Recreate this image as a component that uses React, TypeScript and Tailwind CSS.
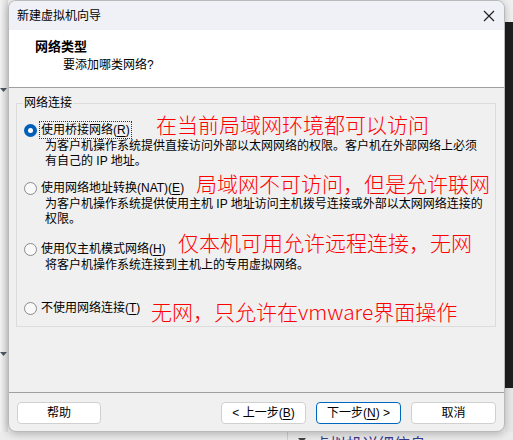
import React from "react";

const UI = "font-['Liberation_Sans','Noto_Sans_CJK_SC',sans-serif]";
const CJK = "font-['Noto_Sans_CJK_SC',sans-serif]";

function Radio({ on }: { on?: boolean }) {
  if (on)
    return (
      <span className="w-[13px] h-[13px] rounded-full bg-[#005fb8] flex items-center justify-center shrink-0">
        <span className="w-[5px] h-[5px] rounded-full bg-white" />
      </span>
    );
  return <span className="w-[13px] h-[13px] rounded-full border border-[#8b8b8b] bg-[#f9f9f9] shrink-0" />;
}

function Row({ on, text, k, focus }: { on?: boolean; text: string; k: string; focus?: boolean }) {
  return (
    <div className="h-[18px] flex items-center">
      <Radio on={on} />
      <span
        className={
          "ml-[2px] px-[1px] leading-[16px] " +
          (focus ? "border border-dotted border-[#333]" : "border border-transparent")
        }
      >
        {text}(<span className="underline underline-offset-2">{k}</span>)
      </span>
    </div>
  );
}

function Btn({ children, primary, w }: { children: React.ReactNode; primary?: boolean; w: string }) {
  return (
    <div
      className={
        "h-[22px] rounded-[4px] bg-white flex items-center justify-center text-[12px] " +
        w +
        (primary ? " border border-[#0067c0]" : " border border-[#d0d0d0]")
      }
    >
      {children}
    </div>
  );
}

const RED = "absolute text-[21px] leading-[21px] font-light text-[#ff0000] whitespace-nowrap " + CJK;

export default function App() {
  return (
    <div className={"w-[513px] h-[440px] overflow-hidden bg-[#f0f0f0] flex flex-col text-black " + UI}>
      <div className="flex h-[432px]">
        {/* left strip */}
        <div className="w-[8px] bg-gradient-to-r from-[#f3f3f3] to-[#dcdcdc] flex flex-col">
          <div className="h-[88px]" />
          <svg width="7" height="4" viewBox="0 0 7 4">
            <polygon points="0,0 7,0 3.5,4" fill="#4b5864" />
          </svg>
          <div className="h-[260px]" />
          <svg width="7" height="4" viewBox="0 0 7 4">
            <polygon points="0,0 7,0 3.5,4" fill="#4b5864" />
          </svg>
        </div>

        {/* dialog */}
        <div className="w-[497px] h-[432px] border border-[#b9b9b9] rounded-[8px] overflow-hidden flex flex-col bg-[#f0f0f0] shadow-[0_2px_8px_rgba(0,0,0,0.25)] relative">
          {/* title bar */}
          <div className="h-[29px] bg-[#eff1f7] flex items-center justify-between pl-[8px] pr-[8px]">
            <span className="text-[12px]">新建虚拟机向导</span>
            <svg width="12" height="12" viewBox="0 0 12 12" className="mr-[1px]">
              <path d="M1 1 L11 11 M11 1 L1 11" stroke="#1a1a1a" strokeWidth="1.1" />
            </svg>
          </div>
          {/* header */}
          <div className="h-[58px] bg-white border-b border-[#a0a0a0] pt-[8px]">
            <div className="pl-[26px] text-[13px] font-bold leading-[18px]">网络类型</div>
            <div className="pl-[54px] text-[12px] leading-[18px]">要添加哪类网络?</div>
          </div>
          {/* body */}
          <div className="flex-1 pt-[7px]">
            <fieldset className="ml-[7px] mr-[8px] border border-[#dcdcdc] pb-[9px]">
              <legend className="ml-[6px] px-[1px] text-[12px] leading-[16px]">网络连接</legend>
              <div className="pl-[7px] text-[12px] flex flex-col">
                <div className="mt-[10px]">
                  <Row on text="使用桥接网络" k="R" focus />
                </div>
                <div className="pl-[21px] leading-[15px]">
                  为客户机操作系统提供直接访问外部以太网网络的权限。客户机在外部网络上必须
                  <br />
                  有自己的 IP 地址。
                </div>
                <div className="mt-[10px]">
                  <Row text="使用网络地址转换(NAT)" k="E" />
                </div>
                <div className="pl-[21px] leading-[15px]">
                  为客户机操作系统提供使用主机 IP 地址访问主机拨号连接或外部以太网网络连接的
                  <br />
                  权限。
                </div>
                <div className="mt-[13px]">
                  <Row text="使用仅主机模式网络" k="H" />
                </div>
                <div className="pl-[21px] leading-[15px]">将客户机操作系统连接到主机上的专用虚拟网络。</div>
                <div className="mt-[26px]">
                  <Row text="不使用网络连接" k="T" />
                </div>
              </div>
            </fieldset>
          </div>
          {/* footer */}
          <div className="h-[39px] border-t border-[#a0a0a0] pt-[9px] pl-[8px] pr-[8px] flex justify-between items-start">
            <Btn w="w-[84px]">帮助</Btn>
            <div className="flex gap-[10px]">
              <Btn w="w-[85px]">
                &lt; 上一步(<span className="underline underline-offset-2">B</span>)
              </Btn>
              <Btn w="w-[85px]" primary>
                下一步(<span className="underline underline-offset-2">N</span>) &gt;
              </Btn>
              <Btn w="w-[85px]">取消</Btn>
            </div>
          </div>

          {/* red annotations */}
          <div className={RED + " left-[147px] top-[113px]"}>在当前局域网环境都可以访问</div>
          <div className={RED + " left-[187px] top-[172px]"}>局域网不可访问，但是允许联网</div>
          <div className={RED + " left-[169px] top-[231px]"}>仅本机可用允许远程连接，无网</div>
          <div className={RED + " left-[142px] top-[300px]"}>无网，只允许在vmware界面操作</div>
        </div>

        {/* right strip */}
        <div className="w-[8px] flex flex-col">
          <div className="h-[22px] bg-[#f0f0f0]" />
          <div className="h-[366px] bg-[#1f1f1f]" />
          <div className="flex-1 bg-[#e8e8e8]" />
        </div>
      </div>

      {/* bottom strip */}
      <div className="h-[8px] flex overflow-hidden bg-[#ececec]">
        <div className="w-[287px]" />
        <div className="w-[1px] bg-[#cfcfcf]" />
        <div className={"pl-[10px] pt-[1px] flex items-start gap-[8px] text-[16px] leading-[20px] text-[#3a3a90] " + CJK}>
          <svg width="8" height="10" viewBox="0 0 8 10" className="mt-[5px]">
            <polygon points="0,0 8,0 4,5" fill="#444" />
          </svg>
          <span>虚拟机详细信息</span>
        </div>
      </div>
    </div>
  );
}
